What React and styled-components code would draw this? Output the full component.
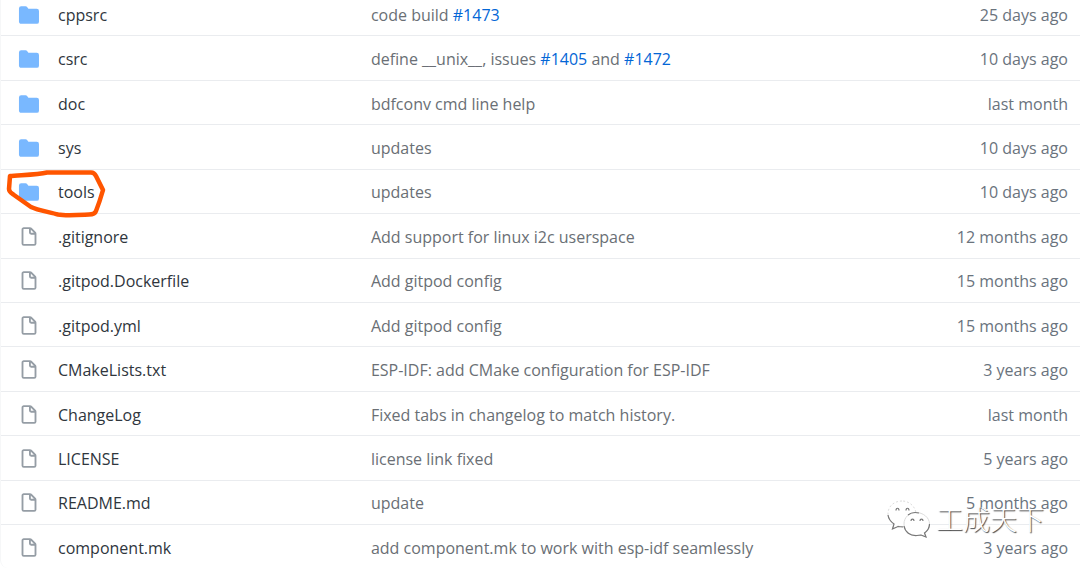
import React from "react";
import styled, { createGlobalStyle } from "styled-components";

const GlobalStyle = createGlobalStyle`
  * { box-sizing: border-box; }
  body {
    margin: 0;
    background: #fff;
    font-family: "Segoe UI", "Open Sans", "Noto Sans", sans-serif;
    font-size: 16px;
    line-height: 24px;
    color: #24292e;
  }
`;

const Page = styled.main`
  position: relative;
  min-height: 100vh;
  overflow: hidden;
`;

const FileTable = styled.table`
  width: 100%;
  height: calc(100vh + 7px);
  margin-top: -8px;
  border-spacing: 0;
  table-layout: fixed;
  border-left: 1px solid #f6f7f8;
  border-bottom-left-radius: 8px;
`;

const IconCol = styled.col`
  width: 57px;
`;
const NameCol = styled.col`
  width: 29%;
`;
const AgeCol = styled.col`
  width: 160px;
`;

const Cell = styled.td`
  padding: 2px 0 0;
  vertical-align: middle;
  white-space: nowrap;
  border-bottom: 1px solid #eaecef;
  tr:last-child & {
    border-bottom: 0;
  }
`;

const IconCell = styled(Cell)`
  padding-left: 17px;
`;

const AgeCell = styled(Cell)`
  padding-right: 12px;
  text-align: right;
  color: #6a737d;
`;

const MessageCell = styled(Cell)`
  color: #6a6f75;
`;

const FileLink = styled.a`
  color: #2f363d;
  text-decoration: none;
`;

const IssueLink = styled.a`
  color: #0366d6;
  text-decoration: none;
`;

const Icon = styled.svg`
  display: block;
  width: 22px;
  height: 22px;
  fill: ${(p) => p.$color};
`;

const Circled = styled.svg`
  position: absolute;
  left: 0;
  top: 160px;
  width: 120px;
  height: 64px;
  pointer-events: none;
`;

const Watermark = styled.div`
  position: absolute;
  right: 36px;
  bottom: 30px;
  display: flex;
  align-items: center;
  gap: 6px;
  pointer-events: none;
`;

const WatermarkIcon = styled.svg`
  width: 44px;
  height: 40px;
`;

const WatermarkText = styled.span`
  font-family: "Noto Sans CJK SC", sans-serif;
  font-size: 27px;
  line-height: 36px;
  font-weight: 300;
  color: #fff;
  text-shadow: 1px 1px 1px #444;
`;

const Folder = () => (
  <Icon viewBox="0 0 16 16" $color="#79b8ff" aria-hidden="true">
    <path d="M1.75 1A1.75 1.75 0 000 2.75v10.5C0 14.216.784 15 1.75 15h12.5A1.75 1.75 0 0016 13.25v-8.5A1.75 1.75 0 0014.25 3h-6.5a.25.25 0 01-.2-.1l-.9-1.2c-.33-.44-.85-.7-1.4-.7h-3.5z" transform="translate(.7 .8) scale(.91)" />
  </Icon>
);

const File = () => (
  <Icon viewBox="0 0 16 16" $color="#959da5" aria-hidden="true">
    <path
      fillRule="evenodd"
      transform="translate(.8 .9) scale(.9)"
      d="M3.75 1.5a.25.25 0 00-.25.25v11.5c0 .138.112.25.25.25h8.5a.25.25 0 00.25-.25V6H9.75A1.75 1.75 0 018 4.25V1.5H3.75zm5.75.56v2.19c0 .138.112.25.25.25h2.19L9.5 2.06zM2 1.75C2 .784 2.784 0 3.75 0h5.086c.464 0 .909.184 1.237.513l3.414 3.414c.329.328.513.773.513 1.237v8.086A1.75 1.75 0 0112.25 15h-8.5A1.75 1.75 0 012 13.25V1.75z"
    />
  </Icon>
);

const issue = (n) => <IssueLink href={`#${n}`}>#{n}</IssueLink>;

const files = [
  { name: "cppsrc", dir: true, message: <>code build {issue(1473)}</>, age: "25 days ago" },
  { name: "csrc", dir: true, message: <>define __unix__, issues {issue(1405)} and {issue(1472)}</>, age: "10 days ago" },
  { name: "doc", dir: true, message: "bdfconv cmd line help", age: "last month" },
  { name: "sys", dir: true, message: "updates", age: "10 days ago" },
  { name: "tools", dir: true, message: "updates", age: "10 days ago" },
  { name: ".gitignore", message: "Add support for linux i2c userspace", age: "12 months ago" },
  { name: ".gitpod.Dockerfile", message: "Add gitpod config", age: "15 months ago" },
  { name: ".gitpod.yml", message: "Add gitpod config", age: "15 months ago" },
  { name: "CMakeLists.txt", message: "ESP-IDF: add CMake configuration for ESP-IDF", age: "3 years ago" },
  { name: "ChangeLog", message: "Fixed tabs in changelog to match history.", age: "last month" },
  { name: "LICENSE", message: "license link fixed", age: "5 years ago" },
  { name: "README.md", message: "update", age: "5 months ago" },
  { name: "component.mk", message: "add component.mk to work with esp-idf seamlessly", age: "3 years ago" },
];

export default function App() {
  return (
    <Page>
      <GlobalStyle />
      <FileTable>
        <colgroup>
          <IconCol />
          <NameCol />
          <col />
          <AgeCol />
        </colgroup>
        <tbody>
          {files.map((f) => (
            <tr key={f.name}>
              <IconCell>{f.dir ? <Folder /> : <File />}</IconCell>
              <Cell>
                <FileLink href={`#${f.name}`}>{f.name}</FileLink>
              </Cell>
              <MessageCell>{f.message}</MessageCell>
              <AgeCell>{f.age}</AgeCell>
            </tr>
          ))}
        </tbody>
      </FileTable>
      <Circled viewBox="0 0 120 64" fill="none" aria-hidden="true">
        <path
          d="M10 16C18 15 37 15 47 12.500H91C94 12.500 95 14 96 16L103 30C101 37 98 46 96 51C95 54 92 54.500 89 54.500C79 55 66 56 58 54.500C49 52 37 50 31 47L14 35C11 33 9 32 9 29Z"
          stroke="#ff5500"
          strokeWidth="4.500"
          strokeLinejoin="round"
        />
      </Circled>
      <Watermark>
        <WatermarkIcon viewBox="0 0 44 40" aria-hidden="true">
          <g fill="#fff" stroke="#dcdcdc" strokeWidth="1" strokeLinejoin="round">
            <path d="M16 2C8 2 2 7.500 2 14.500C2 19 4.500 22.500 8 25L6.500 30L12 27C24 30 31 22 30 14C29 7 23 2 16 2Z" strokeDasharray="2 2" />
            <path d="M30 13.500C23 13.500 18 18.500 18 25C18 32 24 37 31 36.500L35 36L40 38L38.500 34C42 31.500 43.500 28.500 43.500 25C43.500 18.500 37 13.500 30 13.500Z" />
          </g>
          <g fill="none" stroke="#777" strokeWidth="1.200">
            <path d="M2 16C2.500 20 4.500 22.500 8 25L6.500 30L12 27.500L17 28" />
            <path d="M18 27C19 33 24 37 31 36.500L35 36L40 38L38.500 34C42 31.500 43.500 28.500 43.500 25M22 16C25 13.500 29 13 33 14" />
            <path d="M10 11.500C10 8.500 13 8.500 13 11.500M20 11.500C20 8.500 23 8.500 23 11.500M25 22C25 19.500 28 19.500 28 22M34 22C34 19.500 37 19.500 37 22" />
          </g>
        </WatermarkIcon>
        <WatermarkText>工成天下</WatermarkText>
      </Watermark>
    </Page>
  );
}
